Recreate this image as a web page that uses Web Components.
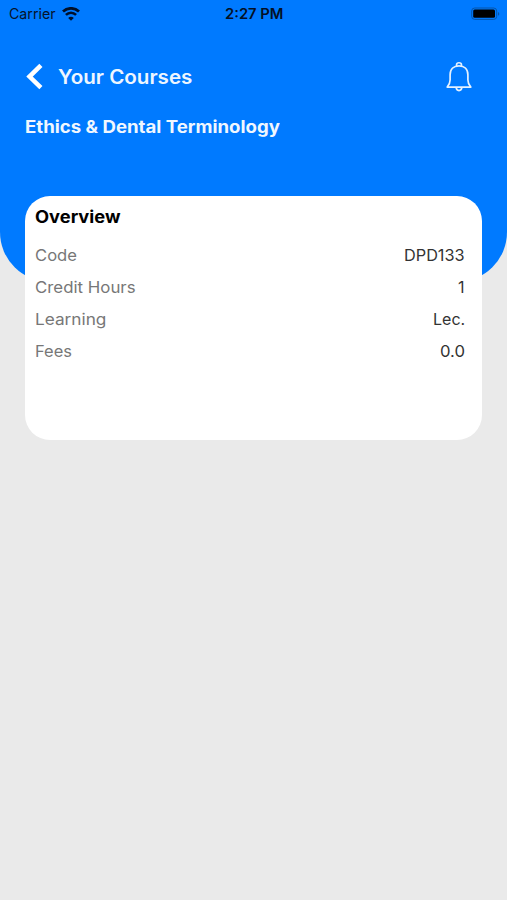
<!DOCTYPE html>
<html lang="en">
<head>
<meta charset="utf-8">
<title>Your Courses</title>
<style>
html,body{margin:0;height:100%;background:#eaeaea}
body{font-family:Inter,"Liberation Sans",sans-serif;overflow:hidden}
</style>
</head>
<body>
<course-page></course-page>
<script>
// Text run whose letters are stretched to a given advance width.
class FitText extends HTMLElement{
  connectedCallback(){
    const root=this.attachShadow({mode:'open'});
    root.innerHTML=`<style>:host{display:block;white-space:nowrap}span{display:inline-block;transform-origin:0 50%}</style><span><slot></slot></span>`;
    const s=root.querySelector('span');
    const target=parseFloat(this.getAttribute('width'));
    this.style.width=target+'px';
    requestAnimationFrame(()=>{s.style.transform=`scaleX(${target/s.offsetWidth})`;});
  }
}
customElements.define('fit-text',FitText);

class StatusBar extends HTMLElement{
  constructor(){
    super();
    this.attachShadow({mode:'open'}).innerHTML=`<style>
    :host{display:grid;grid-template-columns:1fr auto 1fr;align-items:center;height:28px;padding:0 7px 0 9px;color:#06142b;font-size:14.5px;line-height:28px}
    .left{display:flex;align-items:center;gap:6px}
    .time{font-weight:600;font-size:14px;color:#041026;margin-right:2px}
    .bat{justify-self:end;display:block}
    svg{display:block}
    </style>
    <div class="left"><fit-text width="47">Carrier</fit-text>
    <svg width="18" height="14" viewBox="0 0 18 14" fill="none" stroke="#00102a"><path d="M1 4.5C5.6.3 12.4.3 17 4.5" stroke-width="2.8"/><path d="M3.9 7.9C7 5 11 5 14.1 7.9" stroke-width="2.6"/><path d="M9 13.7 6.2 10.9C7.8 9.4 10.2 9.4 11.8 10.9Z" fill="#00102a" stroke="none"/></svg></div>
    <fit-text class="time" width="58">2:27 PM</fit-text>
    <svg class="bat" width="29" height="14" viewBox="0 0 29 14"><rect x=".7" y="1" width="25" height="11.4" rx="3" fill="none" stroke="#0654a8" stroke-width="1"/><rect x="2.2" y="2.6" width="21.8" height="8.2" rx="1.5" fill="#000"/><path d="M27 5c1.8.8 1.8 3 0 3.8z" fill="#0654a8"/></svg>`;
  }
}
customElements.define('status-bar',StatusBar);

class CourseHeader extends HTMLElement{
  constructor(){
    super();
    this.attachShadow({mode:'open'}).innerHTML=`<style>
    :host{display:block;box-sizing:border-box;height:282px;background:#007aff;border-radius:0 0 50px 50px;color:#fff}
    nav{display:flex;align-items:center;height:44px;margin-top:27px;padding:0 34px 0 25px}
    svg{display:block}
    .title{font-size:19.4px;font-weight:600;line-height:24px;margin-left:14px;color:#eef6ff}
    .bell{margin-left:auto}
    .sub{font-size:16.8px;font-weight:650;line-height:22px;margin:17px 0 0 25px;color:#f0f7ff}
    </style>
    <status-bar></status-bar>
    <nav><svg width="19" height="28" viewBox="0 0 19 28"><path d="M15.9 2.4 4.5 13.6 15.9 24.6" fill="none" stroke="#fff" stroke-width="4.5"/></svg>
    <fit-text class="title" width="134.8"><slot name="title"></slot></fit-text>
    <svg class="bell" width="28" height="32" viewBox="0 0 28 32" fill="none" stroke="#e4f1ff" stroke-width="1.7" stroke-linejoin="round"><path d="M5.1 13.8C5.1 8 8.8 4.9 14 4.9S22.9 8 22.9 13.8V19C22.9 22.4 24.2 24.3 25.8 26.1H2.2C3.8 24.3 5.1 22.4 5.1 19Z"/><path d="M11.6 5.1V3.4C11.6 1.2 16.4 1.2 16.4 3.4V5.1M11.2 26.3C11.3 30.7 16.7 30.7 16.8 26.3"/></svg></nav>
    <fit-text class="sub" width="255"><slot name="subtitle"></slot></fit-text>`;
  }
}
customElements.define('course-header',CourseHeader);

class DetailRow extends HTMLElement{
  connectedCallback(){
    this.attachShadow({mode:'open'}).innerHTML=`<style>
    :host{display:flex;justify-content:space-between;align-items:center;height:31.8px;font-size:16px;line-height:24px;color:#777}
    .value{color:#333}
    </style><fit-text width="${this.getAttribute('label-width')}">${this.getAttribute('label')}</fit-text>
    <fit-text class="value" width="${this.getAttribute('value-width')}"><slot></slot></fit-text>`;
  }
}
customElements.define('detail-row',DetailRow);

class OverviewCard extends HTMLElement{
  constructor(){
    super();
    this.attachShadow({mode:'open'}).innerHTML=`<style>
    :host{display:block;box-sizing:border-box;height:244.4px;margin:-86px 25px 0;padding:9px 17px 0 10px;background:#fff;border-radius:25px;position:relative}
    .head{font-size:17px;font-weight:650;line-height:24px;color:#000;margin-bottom:10.6px}
    </style><fit-text class="head" width="85">Overview</fit-text><slot></slot>`;
  }
}
customElements.define('overview-card',OverviewCard);

class CoursePage extends HTMLElement{
  constructor(){
    super();
    this.attachShadow({mode:'open'}).innerHTML=`<style>:host{display:block;min-height:100vh;background:#eaeaea}</style>
    <course-header><span slot="title">Your Courses</span><span slot="subtitle">Ethics &amp; Dental Terminology</span></course-header>
    <overview-card>
      <detail-row label="Code" label-width="41.5" value-width="61">DPD133</detail-row>
      <detail-row label="Credit Hours" label-width="101" value-width="7">1</detail-row>
      <detail-row label="Learning" label-width="71" value-width="32">Lec.</detail-row>
      <detail-row label="Fees" label-width="37" value-width="25">0.0</detail-row>
    </overview-card>`;
  }
}
customElements.define('course-page',CoursePage);
</script>
</body>
</html>
